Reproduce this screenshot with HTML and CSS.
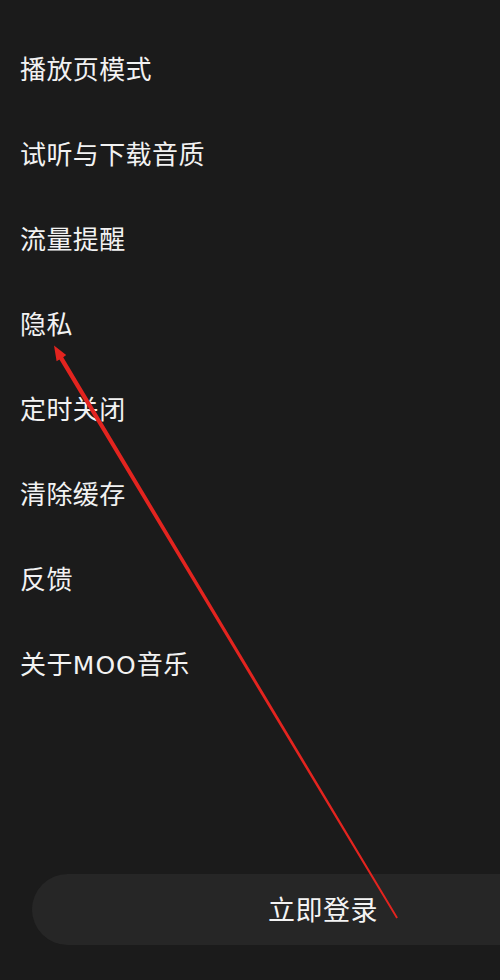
FILE: index.html
```html
<!DOCTYPE html>
<html lang="zh-CN">
<head>
<meta charset="utf-8">
<title>设置</title>
<link rel="stylesheet" href="styles.css">
</head>
<body>
<div class="page">
  <ul class="menu">
    <li class="menu-item">播放页模式</li>
    <li class="menu-item">试听与下载音质</li>
    <li class="menu-item">流量提醒</li>
    <li class="menu-item">隐私</li>
    <li class="menu-item">定时关闭</li>
    <li class="menu-item">清除缓存</li>
    <li class="menu-item">反馈</li>
    <li class="menu-item">关于<span class="latin">MOO</span>音乐</li>
  </ul>
  <div class="login-wrap">
    <button class="login-btn">立即登录</button>
  </div>
  <svg class="annotation" width="500" height="980" viewBox="0 0 500 980">
    <polygon fill="#e3241f" points="54,345.5 66.2,355 63.2,357.2 397.9,917.6 396.3,918.6 59.4,359.6 56.6,361.3"/>
  </svg>
</div>
</body>
</html>
```

FILE: styles.css
```css
* { box-sizing: border-box; }
html, body {
  margin: 0;
  padding: 0;
  background: #1b1b1b;
}
body {
  width: 500px;
  height: 980px;
  overflow: hidden;
  font-family: "Noto Sans CJK SC", "Noto Sans", sans-serif;
  color: #f2f2f2;
}
.page {
  position: relative;
  width: 500px;
  height: 980px;
  display: flex;
  flex-direction: column;
  overflow: hidden;
}
.menu {
  list-style: none;
  margin: 0;
  padding: 25px 0 0 20px;
}
.menu-item {
  height: 85px;
  line-height: 85px;
  font-size: 26px;
  letter-spacing: 0.4px;
}
.latin {
  font-family: "DejaVu Sans", "Noto Sans", sans-serif;
  font-size: 25px;
  letter-spacing: 1px;
}
.login-wrap {
  margin-top: auto;
  margin-bottom: 35px;
  padding-left: 32px;
  display: flex;
}
.login-btn {
  flex: none;
  width: 582px;
  height: 71px;
  border: none;
  border-radius: 36px;
  background: #262626;
  color: #f4f4f4;
  font-family: "Noto Sans CJK SC", "Noto Sans", sans-serif;
  font-size: 27px;
  letter-spacing: 0.5px;
  padding: 0 0 3px 0;
}
.annotation {
  position: absolute;
  left: 0;
  top: 0;
  pointer-events: none;
}
```
